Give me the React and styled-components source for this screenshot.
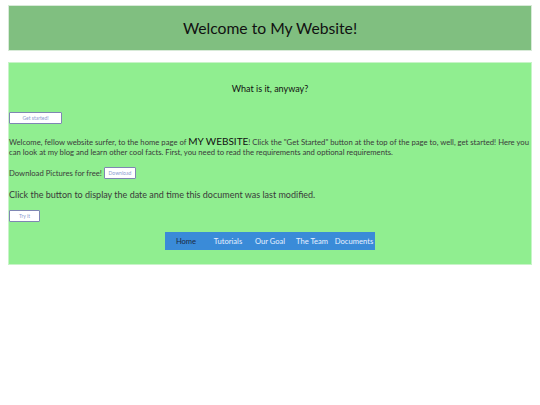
import React from 'react'
import styled, { createGlobalStyle } from 'styled-components'

const GlobalStyle = createGlobalStyle`
	body {
		margin: 0;
		padding: 5px 8px;
		font-family: Lato, "Liberation Sans", sans-serif;
		background: #fff;
	}
`

const Header = styled.header`
	background-color: #80bf80;
	height: 46px;
	display: flex;
	align-items: center;
	justify-content: center;
	border: 1px solid #d8ead8;
	box-sizing: border-box;
`

const Title = styled.h1`
	margin: 0;
	font-size: 15.7px;
	font-weight: 400;
	color: #111;
`

const Panel = styled.main`
	margin-top: 11px;
	background-color: #90ee90;
	padding: 20px 0 14px;
	border: 1px solid #c8f4c8;
`

const SubHead = styled.h2`
	margin: 0 0 18px;
	font-size: 9px;
	font-weight: 400;
	text-align: center;
	color: #111;
`

const Button = styled.button`
	background: #fff;
	border: 1px solid #7f86b3;
	border-radius: 1px;
	color: #8a9bd0;
	font-family: Lato, "Liberation Sans", sans-serif;
	font-size: 5px;
	padding: 0;
	width: ${props => props.w}px;
	height: ${props => props.h || 12}px;
	margin: ${props => props.m || '0'};
	cursor: pointer;
	vertical-align: middle;
`

const Para = styled.p`
	margin: 0;
	font-size: 7.7px;
	line-height: 10px;
	color: #3a3a3a;
`

const Big = styled.span`
	font-size: 10px;
	color: #111;
`

const Row = styled.div`
	display: flex;
	align-items: center;
	margin: ${props => props.m || '0'};
	font-size: 7.7px;
	color: #3a3a3a;
`

const Lead = styled.p`
	margin: ${props => props.m || '0'};
	font-size: 9px;
	color: #3a3a3a;
`

const Nav = styled.nav`
	display: flex;
	width: 210px;
	height: 18px;
	margin: 10px auto 0;
	background-color: #3a8bd8;
	overflow: hidden;
`

const NavItem = styled.a`
	flex: 1;
	display: flex;
	align-items: center;
	justify-content: center;
	font-size: 7.6px;
	color: ${props => props.active ? '#1a2a44' : '#e6f0ff'};
	text-decoration: none;
	white-space: nowrap;
`

const links = ['Home', 'Tutorials', 'Our Goal', 'The Team', 'Documents']

export default () => {
	return (
		<>
			<GlobalStyle />
			<Header>
				<Title>Welcome to My Website!</Title>
			</Header>
			<Panel>
				<SubHead>What is it, anyway?</SubHead>
				<Button w={53} m="0 0 12px">Get started!</Button>
				<Para>
					Welcome, fellow website surfer, to the home page of <Big>MY WEBSITE</Big>! Click the "Get Started" button at the top of the page to, well, get started! Here you can look at my blog and learn other cool facts. First, you need to read the requirements and optional requirements.
				</Para>
				<Row m="10px 0 0">
					Download Pictures for free! <Button w={32} h={12} m="0 0 0 2px">Download</Button>
				</Row>
				<Lead m="10px 0 0">Click the button to display the date and time this document was last modified.</Lead>
				<Button w={31} m="9px 0 0">Try it</Button>
				<Nav>
					{links.map((l, i) => (
						<NavItem key={l} active={i === 0}>{l}</NavItem>
					))}
				</Nav>
			</Panel>
		</>
	)
}
